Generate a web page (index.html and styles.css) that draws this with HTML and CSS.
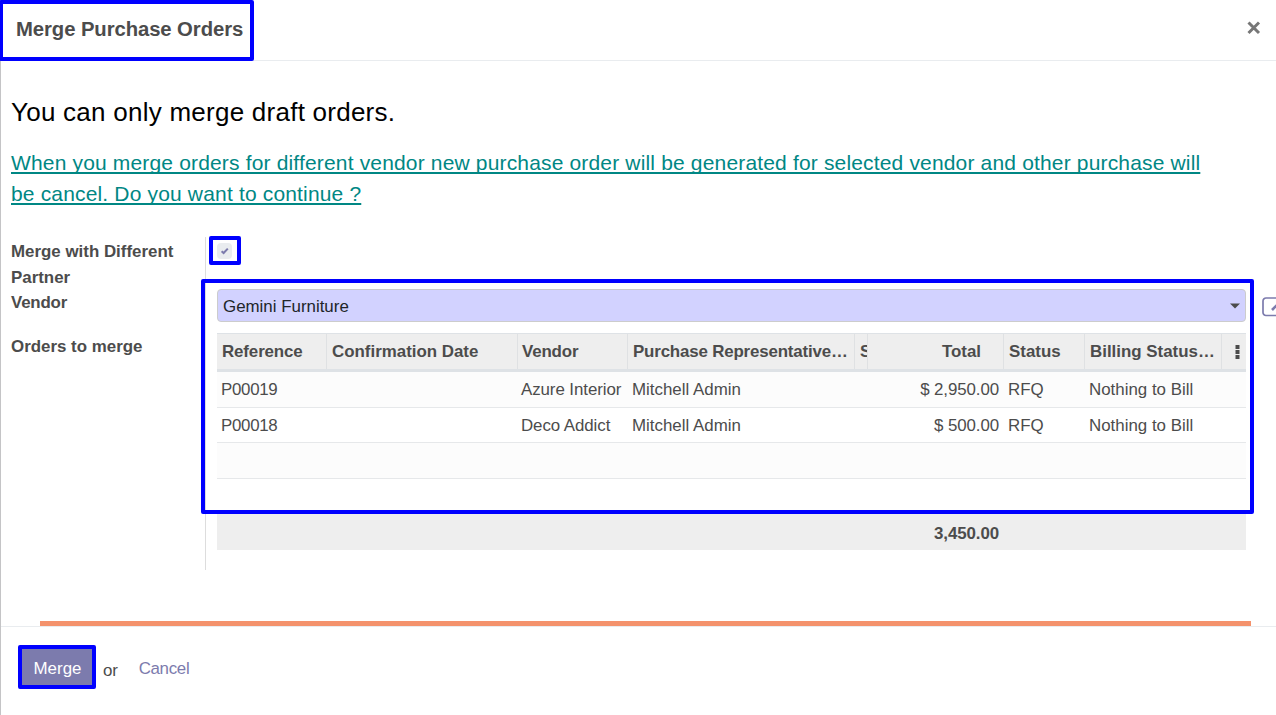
FILE: index.html
```html
<!DOCTYPE html>
<html lang="en">
<head>
<meta charset="utf-8">
<title>Merge Purchase Orders</title>
<link rel="stylesheet" href="styles.css">
</head>
<body>
<div class="dialog">
  <header class="dialog-header">
    <h4 class="title">Merge Purchase Orders</h4>
    <button class="close" aria-label="Close"><svg width="14" height="14" viewBox="0 0 14 14"><path d="M1.5 1.5 12 12M12 1.5 1.5 12" stroke="#777" stroke-width="3" fill="none"/></svg></button>
  </header>
  <main class="dialog-body">
    <h2 class="notice">You can only merge draft orders.</h2>
    <p class="warning">When you merge orders for different vendor new purchase order will be generated for selected vendor and other purchase will<br>be cancel. Do you want to continue ?</p>
    <div class="form">
      <div class="labels">
        <label class="label label-partner">Merge with Different Partner</label>
        <label class="label label-vendor">Vendor</label>
        <label class="label">Orders to merge</label>
      </div>
      <div class="fields">
        <span class="checkbox"><svg width="15" height="16" viewBox="0 0 15 16"><path d="M4.6 8.2 6.6 10 10.8 5.6" stroke="#7c7bad" stroke-width="2" fill="none"/></svg></span>
        <div class="vendor-row">
          <div class="select"><span>Gemini Furniture</span><svg class="caret" width="10" height="6" viewBox="0 0 10 6"><path d="M0 .5H10L5 5.5Z" fill="#4c4c4c"/></svg></div>
          <svg class="external" width="20" height="20" viewBox="0 0 20 20"><rect x="1" y="1" width="18" height="17.5" rx="3" fill="none" stroke="#7c7bad" stroke-width="1.7"/><path d="M10 13 15 8" stroke="#7c7bad" stroke-width="2.6"/></svg>
        </div>
        <div class="table">
          <div class="row head"><span>Reference</span><span>Confirmation Date</span><span>Vendor</span><span class="rep">Purchase Representative…</span><span>S</span><span class="num">Total</span><span>Status</span><span>Billing Status…</span><span class="more"><svg width="5" height="14" viewBox="0 0 5 14"><path d="M.5 0h4v4h-4zM.5 5h4v4h-4zM.5 10h4v4h-4z" fill="#4c4c4c"/></svg></span></div>
          <div class="row odd"><span class="ref">P00019</span><span></span><span class="partner">Azure Interior</span><span>Mitchell Admin</span><span></span><span class="num">$ 2,950.00</span><span>RFQ</span><span>Nothing to Bill</span><span></span></div>
          <div class="row tall"><span class="ref">P00018</span><span></span><span class="partner">Deco Addict</span><span>Mitchell Admin</span><span></span><span class="num">$ 500.00</span><span>RFQ</span><span>Nothing to Bill</span><span></span></div>
          <div class="row odd"></div>
          <div class="row tall"></div>
          <div class="row total"><span></span><span></span><span></span><span></span><span></span><span class="num">3,450.00</span></div>
        </div>
      </div>
    </div>
  </main>
  <footer class="dialog-footer">
    <button class="merge">Merge</button>
    <span class="or">or</span>
    <a class="cancel">Cancel</a>
  </footer>
  <div class="progress"></div>
  <div class="mark mark-title"></div>
  <div class="mark mark-check"></div>
  <div class="mark mark-orders"></div>
  <div class="mark mark-merge"></div>
</div>
</body>
</html>
```
FILE: styles.css
```css
* { box-sizing: border-box; }
body { margin: 0; background: #fff; font: 16.9px/25.35px "Liberation Sans", Arial, sans-serif; color: #4c4c4c; overflow: hidden; }
h2, h4, p { margin: 0; font-weight: normal; }
button { border: 0; padding: 0; font: inherit; }
.dialog { position: relative; width: 1276px; height: 715px; border-left: 1px solid #c4c4c6; display: flex; flex-direction: column; }
.dialog-header { height: 61px; flex: none; border-bottom: 1px solid #e9ecef; display: flex; justify-content: space-between; padding: 14px 15px 0; }
.title { font-size: 20.3px; line-height: 30px; font-weight: bold; letter-spacing: -.08px; }
.close { background: none; height: 14px; margin-top: 7px; display: flex; }
.dialog-body { height: 565px; flex: none; padding: 34px 0 0 10px; }
.notice { font-size: 26px; line-height: 34px; color: #000; letter-spacing: .25px; }
.warning { margin-top: 18px; font-size: 21px; line-height: 31px; letter-spacing: .163px; color: #008784; text-decoration: underline; text-decoration-thickness: 2px; text-underline-offset: 2px; text-decoration-skip-ink: none; white-space: nowrap; }
.form { display: flex; margin-top: 28px; height: 333px; }
.labels { width: 195px; flex: none; border-right: 1px solid #ddd; display: flex; flex-direction: column; padding: 2px 0 0; }
.label { font-weight: bold; width: 175px; }
.label-partner { line-height: 26px; }
.label-vendor { margin: -1px 0 19px; line-height: 25px; letter-spacing: -.2px; }
.fields { flex: none; width: 1076px; padding: 6px 0 0 11px; }
.checkbox { display: flex; width: 15px; height: 16px; background: #e9ecef; border-radius: 4px; }
.vendor-row { display: flex; gap: 16px; margin-top: 30px; height: 33px; }
.select { flex: none; width: 1029px; height: 33px; border: 1px solid #ccc; border-radius: 4px; background: #d2d2ff; color: #212529; display: flex; align-items: center; justify-content: space-between; padding: 1px 5px 0; line-height: 31px; }
.external { margin-top: 8px; flex: none; }
.table { width: 1029px; margin-top: 11px; }
.row { display: grid; grid-template-columns: 110px 191px 110px 227px 13px 136px 81px 137px 24px; height: 36px; border-bottom: 1px solid #e6e8ea; line-height: 35px; white-space: nowrap; }
.row > span { padding-left: 4px; overflow: hidden; }
.row > .num { text-align: right; padding: 0 5px 0 0; letter-spacing: -.1px; }
.row > .ref { letter-spacing: -.3px; }
.row > .partner { padding-left: 3px; letter-spacing: -.08px; }
.odd { background: #fcfcfc; }
.head { height: 39px; background: #eee; font-weight: bold; border-top: 1px solid #dee2e6; border-bottom: 3px solid #dee2e6; }
.head > span { padding-left: 5px; border-right: 1px solid #dfe1e3; }
.head > span:first-child { letter-spacing: -.12px; }
.head > span:nth-child(3) { padding-left: 4px; letter-spacing: -.15px; }
.head > .rep { letter-spacing: -.17px; }
.head > .num { padding-right: 22px; letter-spacing: 0; }
.head > .more { display: flex; align-items: center; padding: 1px 0 0 13px; border: 0; }
.row.tall { height: 35px; line-height: 36px; }
.row.total { height: 36px; background: #eee; font-weight: bold; border: 0; padding-top: 2px; }
.dialog-footer { flex: 1; border-top: 1px solid #e9ecef; display: flex; align-items: flex-start; padding: 22px 0 0 20px; }
.merge { width: 72px; height: 38px; color: #fff; background: #7c7bad; padding: 2px 0 0 1px; }
.or { margin: 9px 21px 0 10px; letter-spacing: -.2px; }
.cancel { margin-top: 7px; color: #7c7bad; letter-spacing: -.3px; }
.progress { position: absolute; left: 39px; top: 621px; width: 1211px; height: 5px; background: #f4926c; }
.mark { position: absolute; border: 4px solid #00f; border-radius: 2px; }
.mark-title { left: -2px; top: 0; width: 255px; height: 61px; }
.mark-check { left: 208px; top: 236px; width: 32px; height: 29px; }
.mark-orders { left: 200px; top: 279px; width: 1053px; height: 235px; }
.mark-merge { left: 17px; top: 645px; width: 78px; height: 44px; }
```
